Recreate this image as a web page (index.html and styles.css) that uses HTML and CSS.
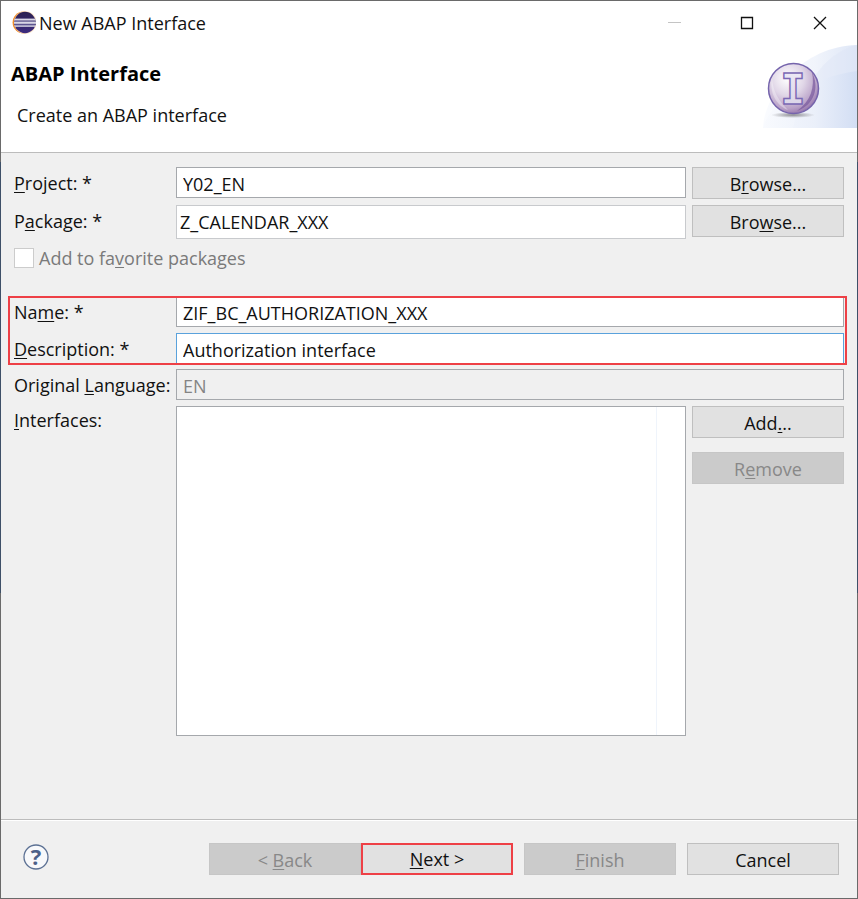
FILE: index.html
```html
<!DOCTYPE html>
<html lang="en">
<head>
<meta charset="utf-8">
<title>New ABAP Interface</title>
<link rel="stylesheet" href="styles.css">
</head>
<body>
<main class="window">
  <header class="header">
    <div class="titlebar">
      <svg class="logo" viewBox="0 0 24 24" aria-hidden="true">
        <defs>
          <linearGradient id="globe" x1="0" y1="0" x2="0" y2="1">
            <stop offset="0" stop-color="#2b2050"/>
            <stop offset="1" stop-color="#3d2c80"/>
          </linearGradient>
          <clipPath id="globe-clip"><circle cx="13" cy="11.500" r="11"/></clipPath>
        </defs>
        <circle cx="11.600" cy="11.500" r="11" fill="#f08c28"/>
        <circle cx="13.400" cy="11.500" r="11.200" fill="#fbe3c8"/>
        <circle cx="13" cy="11.500" r="10.700" fill="url(#globe)"/>
        <g clip-path="url(#globe-clip)" fill="#d9d7e6">
          <rect x="2" y="7.600" width="22" height="2"/>
          <rect x="2" y="10.900" width="22" height="2"/>
          <rect x="2" y="14.200" width="22" height="1.600"/>
          <rect x="2" y="9.600" width="22" height="1.300" fill="#8580aa"/>
          <rect x="2" y="12.900" width="22" height="1.300" fill="#5d5590"/>
        </g>
      </svg>
      <span class="title">New ABAP Interface</span>
      <div class="controls">
        <button class="control" type="button" aria-label="Minimize" disabled>
          <svg viewBox="0 0 14 14"><path d="M1 6.500H14" stroke="#c4c4c4"/></svg>
        </button>
        <button class="control" type="button" aria-label="Maximize">
          <svg viewBox="0 0 14 14"><path d="M1.500 1.500H12.500V12.500H1.500Z" fill="none" stroke="#111" stroke-width="1.300"/></svg>
        </button>
        <button class="control" type="button" aria-label="Close">
          <svg viewBox="0 0 14 14"><path d="M1 1L13 13M13 1L1 13" stroke="#111" stroke-width="1.300"/></svg>
        </button>
      </div>
    </div>
    <h1 class="heading">ABAP Interface</h1>
    <p class="subheading">Create an ABAP interface</p>
    <svg class="banner" viewBox="0 0 94 84" aria-hidden="true">
      <defs>
        <linearGradient id="wave" x1="0" y1="0" x2="1" y2="0">
          <stop offset="0" stop-color="#f8fafe"/>
          <stop offset=".55" stop-color="#ebf0fa"/>
          <stop offset="1" stop-color="#d0dcf3"/>
        </linearGradient>
        <radialGradient id="ball" cx=".38" cy=".3" r=".75">
          <stop offset="0" stop-color="#fff"/>
          <stop offset=".45" stop-color="#e0d6e7"/>
          <stop offset=".8" stop-color="#b9a1c8"/>
          <stop offset="1" stop-color="#9170a8"/>
        </radialGradient>
        <linearGradient id="letter" x1="0" y1="0" x2="0" y2="1">
          <stop offset="0" stop-color="#f1edf7"/>
          <stop offset="1" stop-color="#d6d0e5"/>
        </linearGradient>
        <radialGradient id="shadow">
          <stop offset="0" stop-color="#8c8c90"/>
          <stop offset="1" stop-color="#8c8c90" stop-opacity="0"/>
        </radialGradient>
      </defs>
      <path d="M0 84C1 50 40 2 94 1V84Z" fill="url(#wave)" opacity=".7"/>
      <path d="M30 84C40 45 58 10 94 1V84Z" fill="#dbe4f6" opacity=".4"/>
      <path d="M0 84C5 60 45 34 94 27V84Z" fill="url(#wave)" opacity=".8"/>
      <ellipse cx="30" cy="71" rx="22" ry="3" fill="url(#shadow)"/>
      <circle cx="30.500" cy="44.500" r="25" fill="url(#ball)" stroke="#7564ac" stroke-width="1.500"/>
      <path d="M49 28C57 44 51 61 34 67C48 57 52 43 49 28Z" fill="#73539a" opacity=".65"/>
      <path d="M9 34C6 49 14 62 25 66C16 57 10 48 9 34Z" fill="#fff" opacity=".35"/>
      <text class="ball-letter" x="30" y="60" text-anchor="middle" fill="url(#letter)" stroke="#7a68b4" stroke-width="1.400">I</text>
    </svg>
  </header>

  <form class="form" id="wizard">
    <div class="group">
      <label for="project"><u>P</u>roject: *</label>
      <input class="field" id="project" type="text" value="Y02_EN">
      <button class="button" type="button">B<u>r</u>owse...</button>
      <label for="package">P<u>a</u>ckage: *</label>
      <input class="field field-combo" id="package" type="text" value="Z_CALENDAR_XXX">
      <button class="button" type="button">Bro<u>w</u>se...</button>
      <div class="favorite">
        <input class="check" id="favorite" type="checkbox" disabled>
        <label for="favorite">Add to fa<u>v</u>orite packages</label>
      </div>
    </div>

    <div class="group group-marked">
      <label for="name">Na<u>m</u>e: *</label>
      <input class="field field-wide" id="name" type="text" value="ZIF_BC_AUTHORIZATION_XXX">
      <label for="description"><u>D</u>escription: *</label>
      <input class="field field-wide field-active" id="description" type="text" value="Authorization interface">
    </div>

    <div class="group group-list">
      <label for="language">Original <u>L</u>anguage:</label>
      <input class="field field-wide" id="language" type="text" value="EN" disabled>
      <label class="list-label" for="interfaces"><u>I</u>nterfaces:</label>
      <div class="list" id="interfaces" role="listbox" tabindex="0" aria-label="Interfaces"></div>
      <div class="list-actions">
        <button class="button" type="button">Add<u>.</u>..</button>
        <button class="button" type="button" disabled>R<u>e</u>move</button>
      </div>
    </div>
  </form>

  <footer class="footer">
    <button class="help" type="button" aria-label="Help">
      <svg viewBox="0 0 26 26">
        <circle cx="13" cy="13" r="12" fill="#f8f9fb" stroke="#5c7194" stroke-width="1.300"/>
        <text class="help-mark" x="13" y="21" text-anchor="middle" fill="#4c6088">?</text>
      </svg>
    </button>
    <div class="steps">
      <button class="button" type="button" disabled>&lt; <u>B</u>ack</button>
      <button class="button button-next" type="button"><u>N</u>ext &gt;</button>
    </div>
    <button class="button" type="button" disabled><u>F</u>inish</button>
    <button class="button" type="button">Cancel</button>
  </footer>
</main>
</body>
</html>
```

FILE: styles.css
```css
* {
  box-sizing: border-box;
}

body {
  margin: 0;
  padding: 1px;
  min-height: 100vh;
  display: flex;
  background: linear-gradient(#6a6a6a 18%, #3e5068 18%, #3e5068 66%, #6a6a6a 66%);
  color: #111;
  font: 18px/24px "Open Sans", "Noto Sans", sans-serif;
}

button,
input {
  font: inherit;
  color: inherit;
}

u {
  text-decoration-thickness: 1px;
  text-underline-offset: 2px;
  text-decoration-skip-ink: none;
}

.window {
  flex: 1;
  min-width: 0;
  display: flex;
  flex-direction: column;
  background: #f0f0f0;
}

.header {
  position: relative;
  height: 152px;
  background: #fff;
  border-bottom: 1px solid #bcbcbc;
}

.titlebar {
  display: flex;
  align-items: center;
  height: 44px;
  padding: 0 1px 0 11px;
}

.logo {
  width: 24px;
  height: 24px;
}

.title {
  flex: 1;
  padding-left: 3px;
}

.controls {
  display: flex;
}

.control {
  width: 73px;
  height: 42px;
  padding: 0;
  border: 0;
  background: none;
}

.control svg {
  display: block;
  width: 14px;
  height: 14px;
  margin: auto;
}

.heading {
  margin: 16px 0 0 10px;
  font-size: 20px;
  line-height: 26px;
  font-weight: 700;
  color: #000;
}

.subheading {
  margin: 16px 0 0 16px;
}

.banner {
  position: absolute;
  right: 0;
  top: 43px;
  width: 94px;
  height: 84px;
}

.ball-letter {
  font: bold 42px "DejaVu Sans Mono", monospace;
}

.form {
  flex: 1;
  display: flex;
  flex-direction: column;
  padding: 14px 13px 83px;
}

.group {
  position: relative;
  display: grid;
  grid-template-columns: 156px minmax(0, 1fr) 152px;
  gap: 6px;
  align-items: start;
  white-space: nowrap;
}

.group > label {
  padding-top: 4px;
}

.group-marked {
  margin-top: 26px;
}

.group-marked::after {
  content: "";
  position: absolute;
  inset: 0 -3px -1px -6px;
  border: 2px solid #ee4046;
  pointer-events: none;
}

.group-list {
  flex: 1;
  grid-template-rows: auto 1fr;
  margin-top: 5px;
}

.field {
  width: 100%;
  min-width: 0;
  height: 31px;
  padding: 2px 6px 0;
  border: 1px solid #a5a8ac;
  border-radius: 0;
  background: #fff;
}

.field-combo {
  height: 34px;
  padding: 0 3px;
  border-color: #c8cacd;
}

.field-wide {
  grid-column: 2 / -1;
}

.field-active {
  border-color: #5aa2dc;
}

.field:disabled {
  background: #f0f0f0;
  color: #848484;
}

.button {
  width: 152px;
  height: 32px;
  padding: 2px 0 0;
  border: 1px solid #bfbfbf;
  border-radius: 0;
  background: #e1e1e1;
}

.button:disabled {
  border-color: #c6c6c6;
  background: #cbcbcb;
  color: #888;
}

.favorite {
  grid-column: 1 / -1;
  display: flex;
  align-items: center;
  gap: 5px;
  padding-top: 1px;
  color: #7a7a7a;
}

.check {
  appearance: none;
  width: 20px;
  height: 20px;
  margin: 0;
  border: 1px solid #ccc;
  background: #fff;
}

.group > .list-label {
  padding-top: 2px;
}

.list {
  align-self: stretch;
  border: 1px solid #a5a8ac;
  background: linear-gradient(to left, #fff 28px, #eff4fb 28px, #eff4fb 29px, #fff 29px);
}

.list-actions {
  display: grid;
  gap: 14px;
}

.footer {
  display: flex;
  align-items: center;
  gap: 11px;
  height: 79px;
  padding: 0 18px 1px 22px;
  border-top: 1px solid #bcbcbc;
  box-shadow: inset 0 1px #fff;
}

.help {
  margin: 0 auto 4px 0;
  padding: 0;
  border: 0;
  background: none;
}

.help svg {
  display: block;
  width: 26px;
  height: 26px;
  overflow: visible;
}

.help-mark {
  font: bold 22px "Open Sans", sans-serif;
}

.steps {
  display: flex;
}

.button-next {
  border: 2px solid #ee4046;
  padding-top: 0;
}
```
